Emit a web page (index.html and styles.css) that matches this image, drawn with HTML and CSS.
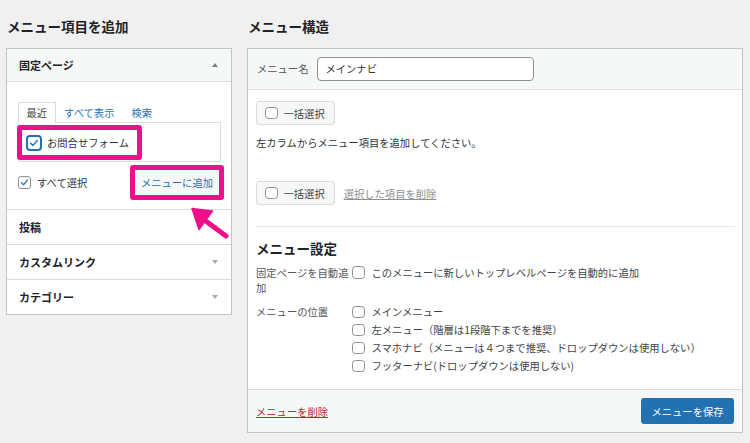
FILE: index.html
```html
<!DOCTYPE html>
<html lang="ja">
<head>
<meta charset="utf-8">
<link rel="stylesheet" href="styles.css">
</head>
<body>
<div class="page">
  <section class="col-left">
    <h2 class="col-title">メニュー項目を追加</h2>
    <div class="acc">
      <div class="acc-head first">
        <span>固定ページ</span><span class="tri tri-up"></span>
      </div>
      <div class="acc-body">
        <ul class="tabs">
          <li class="tab active">最近</li>
          <li class="tab">すべて表示</li>
          <li class="tab">検索</li>
        </ul>
        <div class="tab-panel">
          <label class="pick-item">
            <span class="cb cb-focus"><svg viewBox="0 0 16 16"><path d="M3.6 8.2 L6.6 11.2 L12.4 4.6"/></svg></span>お問合せフォーム
          </label>
        </div>
        <div class="acc-actions">
          <label class="select-all">
            <span class="cb cb-sm"><svg viewBox="0 0 16 16"><path d="M3.6 8.2 L6.6 11.2 L12.4 4.6"/></svg></span>すべて選択
          </label>
          <span class="add-btn">メニューに追加</span>
        </div>
      </div>
      <div class="acc-head closed"><span>投稿</span><span class="tri tri-down"></span></div>
      <div class="acc-head closed"><span>カスタムリンク</span><span class="tri tri-down"></span></div>
      <div class="acc-head closed"><span>カテゴリー</span><span class="tri tri-down"></span></div>
    </div>
  </section>

  <section class="col-right">
    <h2 class="col-title">メニュー構造</h2>
    <div class="menu-box">
      <div class="menu-head">
        <span class="name-label">メニュー名</span>
        <span class="name-input">メインナビ</span>
      </div>
      <div class="menu-body">
        <span class="bulk-btn"><span class="cb cb-plain"></span>一括選択</span>
        <p class="hint">左カラムからメニュー項目を追加してください。</p>
        <div class="bulk-row">
          <span class="bulk-btn"><span class="cb cb-plain"></span>一括選択</span>
          <span class="del-selected">選択した項目を削除</span>
        </div>
        <div class="divider"></div>
        <h3 class="set-title">メニュー設定</h3>
        <div class="set-row first">
          <span class="set-label">固定ページを自動追加</span>
          <div class="opts">
            <label class="opt"><span class="cb cb-plain"></span>このメニューに新しいトップレベルページを自動的に追加</label>
          </div>
        </div>
        <div class="set-row second">
          <span class="set-label">メニューの位置</span>
          <div class="opts">
            <label class="opt"><span class="cb cb-plain"></span>メインメニュー</label>
            <label class="opt"><span class="cb cb-plain"></span>左メニュー（階層は1段階下までを推奨）</label>
            <label class="opt"><span class="cb cb-plain"></span>スマホナビ（メニューは４つまで推奨、ドロップダウンは使用しない）</label>
            <label class="opt"><span class="cb cb-plain"></span>フッターナビ(ドロップダウンは使用しない)</label>
          </div>
        </div>
      </div>
      <div class="menu-foot">
        <span class="del-menu">メニューを削除</span>
        <span class="save-btn">メニューを保存</span>
      </div>
    </div>
  </section>

  <svg class="pointer" viewBox="0 0 50 45" width="50" height="45">
    <polygon points="7,10.5 27.5,13 14,31.5" />
    <line x1="18" y1="21" x2="41" y2="38" />
  </svg>
</div>
</body>
</html>
```

FILE: styles.css
```css
* { box-sizing: border-box; }

html, body {
  margin: 0;
  padding: 0;
  background: #f0f0f1;
}

body {
  font-family: "Noto Sans CJK JP", "Noto Sans", sans-serif;
  font-size: 10.3px;
  color: #2c3338;
}

.page {
  position: relative;
  display: flex;
  align-items: flex-start;
  padding: 16px 0 0 6px;
  width: 750px;
  height: 443px;
}

.col-left { width: 226px; }
.col-right { width: 496px; margin-left: 15px; }

.col-title {
  margin: 0 0 12px 1px;
  font-size: 13.5px;
  line-height: 20px;
  font-weight: 700;
  color: #1d2327;
}

/* Left accordion */
.acc {
  background: #fff;
  border: 1px solid #c3c4c7;
}

.acc-head {
  display: flex;
  align-items: center;
  justify-content: space-between;
  height: 34px;
  padding: 0 12px;
  font-size: 11px;
  font-weight: 700;
  color: #1d2327;
}

.acc-head.first {
  height: 33px;
  background: #f6f7f7;
  border-bottom: 1px solid #dcdcde;
}

.acc-head.closed {
  height: 35px;
  border-top: 1px solid #dcdcde;
}

.tri {
  width: 0;
  height: 0;
  border-left: 3.5px solid transparent;
  border-right: 3.5px solid transparent;
  margin-right: 1px;
}
.tri-up { border-bottom: 4px solid #787c82; }
.tri-down { border-top: 4px solid #a7aaad; }

.acc-body {
  padding: 20px 10px 9px 11px;
}

.tabs {
  display: flex;
  margin: 0 0 -1px;
  padding: 0;
  list-style: none;
  position: relative;
  z-index: 1;
}

.tab {
  height: 21px;
  line-height: 20px;
  padding: 0 7.5px;
  color: #2271b1;
  border: 1px solid transparent;
  border-bottom: none;
}

.tab.active {
  color: #3c434a;
  background: #fff;
  border-color: #dcdcde;
}

.tab-panel {
  height: 40px;
  border: 1px solid #dcdcde;
  padding-top: 2px;
}

.pick-item {
  display: inline-flex;
  align-items: center;
  height: 35px;
  margin-left: -2px;
  padding: 0 8px 0 4px;
  border: 5px solid #ee0f8b;
  border-radius: 3px;
  background: #fff;
  color: #2c3338;
  position: relative;
}

.cb {
  display: inline-flex;
  align-items: center;
  justify-content: center;
  flex: none;
  background: #fff;
  border: 1px solid #8c8f94;
  border-radius: 3px;
}

.cb svg {
  width: 100%;
  height: 100%;
  fill: none;
  stroke: #2271b1;
  stroke-width: 1.9;
  stroke-linecap: round;
  stroke-linejoin: round;
}

.cb-focus {
  width: 16px;
  height: 16px;
  margin-right: 5px;
  border: 2px solid #2271b1;
  border-radius: 4px;
}

.cb-sm {
  width: 13px;
  height: 13px;
  margin-right: 6px;
}

.cb-plain {
  width: 12.5px;
  height: 12.5px;
  border-color: #8c8f94;
  border-radius: 3.5px;
}

.acc-actions {
  display: flex;
  align-items: center;
  justify-content: space-between;
  margin: 3px -3px 0 0;
}

.select-all {
  display: inline-flex;
  align-items: center;
  color: #2c3338;
}

.add-btn {
  display: inline-flex;
  align-items: center;
  height: 35px;
  padding: 0 6px;
  border: 5px solid #ee0f8b;
  border-radius: 3px;
  background: #f6f7f7;
  color: #2271b1;
}

/* Right panel */
.menu-box {
  background: #fff;
  border: 1px solid #c3c4c7;
}

.menu-head {
  display: flex;
  align-items: center;
  height: 41px;
  padding: 0 0 1px 9px;
  background: #f6f7f7;
  border-bottom: 1px solid #dcdcde;
}

.name-label {
  color: #50575e;
  margin-right: 9px;
}

.name-input {
  display: flex;
  align-items: center;
  width: 217px;
  height: 24px;
  padding: 0 7px;
  background: #fff;
  border: 1px solid #8c8f94;
  border-radius: 4px;
  color: #2c3338;
}

.menu-body {
  padding: 11px 7px 14px 8px;
}

.bulk-btn {
  display: inline-flex;
  align-items: center;
  height: 24px;
  padding: 0 9px 0 8px;
  background: #f6f7f7;
  border: 1px solid #dcdcde;
  border-radius: 3px;
  color: #3c434a;
}

.bulk-btn .cb { margin-right: 6px; }

.hint {
  margin: 10px 0 0;
  line-height: 16px;
  color: #2c3338;
}

.bulk-row {
  display: flex;
  align-items: center;
  margin-top: 30px;
}

.del-selected {
  margin-left: 9px;
  color: #8c8f94;
  text-decoration: underline;
}

.divider {
  height: 1px;
  margin-top: 21px;
  background: #e6e6e8;
}

.set-title {
  margin: 11px 0 0;
  font-size: 13.5px;
  line-height: 20px;
  font-weight: 700;
  color: #1d2327;
}

.set-row {
  display: flex;
  align-items: flex-start;
}

.set-row.first { margin-top: 7px; line-height: 15px; }
.set-row.second { margin-top: 8px; line-height: 18px; }

.set-label {
  width: 96px;
  flex: none;
  color: #50575e;
}

.opts {
  display: flex;
  flex-direction: column;
}

.opt {
  display: inline-flex;
  align-items: center;
  color: #3c434a;
}

.opt .cb { margin-right: 7px; }

.menu-foot {
  display: flex;
  align-items: center;
  justify-content: space-between;
  height: 43px;
  padding: 0 8px 0 8px;
  background: #f6f7f7;
  border-top: 1px solid #dcdcde;
}

.del-menu {
  color: #b32d2e;
  text-decoration: underline;
}

.save-btn {
  display: inline-flex;
  align-items: center;
  justify-content: center;
  width: 93px;
  height: 26px;
  background: #2271b1;
  border-radius: 3px;
  color: #fff;
}

/* Annotation arrow over the accordion */
.pointer {
  position: absolute;
  left: 185px;
  top: 198px;
  overflow: visible;
}

.pointer polygon {
  fill: #ee0f8b;
  stroke: #ee0f8b;
  stroke-width: 1.5;
  stroke-linejoin: round;
}

.pointer line {
  stroke: #ee0f8b;
  stroke-width: 5;
  stroke-linecap: round;
}
```
